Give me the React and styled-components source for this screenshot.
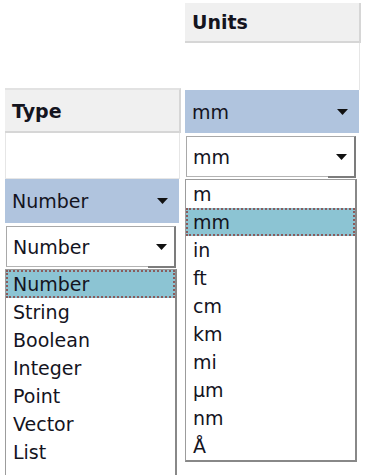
import React from "react";
import styled, { createGlobalStyle } from "styled-components";

const Global = createGlobalStyle`
  *, *::before, *::after { box-sizing: border-box; }
  html, body { margin: 0; padding: 0; background: #ffffff; overflow: hidden; }
  body { font-family: "DejaVu Sans", Verdana, sans-serif; color: #14141e; }
`;

const Page = styled.div`
  display: flex;
  align-items: flex-start;
  gap: 4px;
  padding-left: 5px;
  height: 475px;
  overflow: hidden;
`;

const Column = styled.div`
  width: 176px;
  display: flex;
  flex-direction: column;
  padding-top: ${(p) => p.$offset}px;
`;

const Header = styled.div`
  height: ${(p) => p.$h}px;
  display: flex;
  align-items: center;
  padding-left: 7px;
  background: #f0f0f0;
  font-weight: bold;
  font-size: 19px;
  border-top: ${(p) => (p.$topLine ? "2px solid #e2e2e2" : "none")};
  border-bottom: 2px solid #d6d6d6;
  border-right: 2px solid #d6d6d6;
`;

const EmptyCell = styled.div`
  height: ${(p) => p.$h}px;
  border-right: 1px solid #e6e6e6;
  border-left: ${(p) => (p.$left ? "1px solid #e6e6e6" : "none")};
  border-bottom: ${(p) => (p.$left ? "1px solid #e6e6e6" : "none")};
  margin-right: 1px;
`;

const SelectedCell = styled.div`
  height: ${(p) => p.$h}px;
  margin-right: 2px;
  background: #b0c4de;
  display: flex;
  align-items: center;
  justify-content: space-between;
  padding: 0 11px 0 7px;
  font-size: 19px;
`;

const Arrow = () => (
  <svg width="11" height="6" viewBox="0 0 11 6">
    <polygon points="0,0 11,0 5.5,6" fill="#111" />
  </svg>
);

const Combo = styled.div`
  position: relative;
  width: 170px;
  height: 41px;
  margin: 3px 0 0 1px;
  background: #fff;
  border-left: 1px solid #a9a9a9;
  border-top: 1px solid #a9a9a9;
  border-bottom: 1px solid #b4b4b4;
  border-right: 2px solid #7c7c7c;
  display: flex;
  align-items: center;
  justify-content: space-between;
  padding: 0 7px 0 6px;
  font-size: 19px;
  &::after {
    content: "";
    position: absolute;
    right: -2px;
    bottom: -2px;
    width: 28px;
    height: 2px;
    background: #7c7c7c;
  }
`;

const List = styled.div`
  width: 172px;
  margin-top: 2px;
  background: #fff;
  border-left: 1px solid #9c9c9c;
  border-top: 1px solid #9c9c9c;
  border-right: 2px solid #888;
  border-bottom: 2px solid #888;
  min-height: ${(p) => p.$minH || 0}px;
`;

const Item = styled.div`
  height: 28px;
  line-height: 24px;
  font-size: 19px;
  padding-left: 5px;
  border: 2px dotted ${(p) => (p.$active ? "#8a5c5c" : "transparent")};
  background: ${(p) => (p.$active ? "#8cc4d3" : "transparent")};
`;

const types = ["Number", "String", "Boolean", "Integer", "Point", "Vector", "List"];
const units = ["m", "mm", "in", "ft", "cm", "km", "mi", "µm", "nm", "Å"];

export default function App() {
  return (
    <>
      <Global />
      <Page>
        <Column $offset={88}>
          <Header $h={45} $topLine>Type</Header>
          <EmptyCell $h={46} $left />
          <SelectedCell $h={44}>
            <span>Number</span>
            <Arrow />
          </SelectedCell>
          <Combo>
            <span>Number</span>
            <Arrow />
          </Combo>
          <List $minH={230}>
            {types.map((t) => (
              <Item key={t} $active={t === "Number"}>{t}</Item>
            ))}
          </List>
        </Column>
        <Column $offset={3}>
          <Header $h={40}>Units</Header>
          <EmptyCell $h={47} />
          <SelectedCell $h={43}>
            <span>mm</span>
            <Arrow />
          </SelectedCell>
          <Combo>
            <span>mm</span>
            <Arrow />
          </Combo>
          <List>
            {units.map((u) => (
              <Item key={u} $active={u === "mm"}>{u}</Item>
            ))}
          </List>
        </Column>
      </Page>
    </>
  );
}
